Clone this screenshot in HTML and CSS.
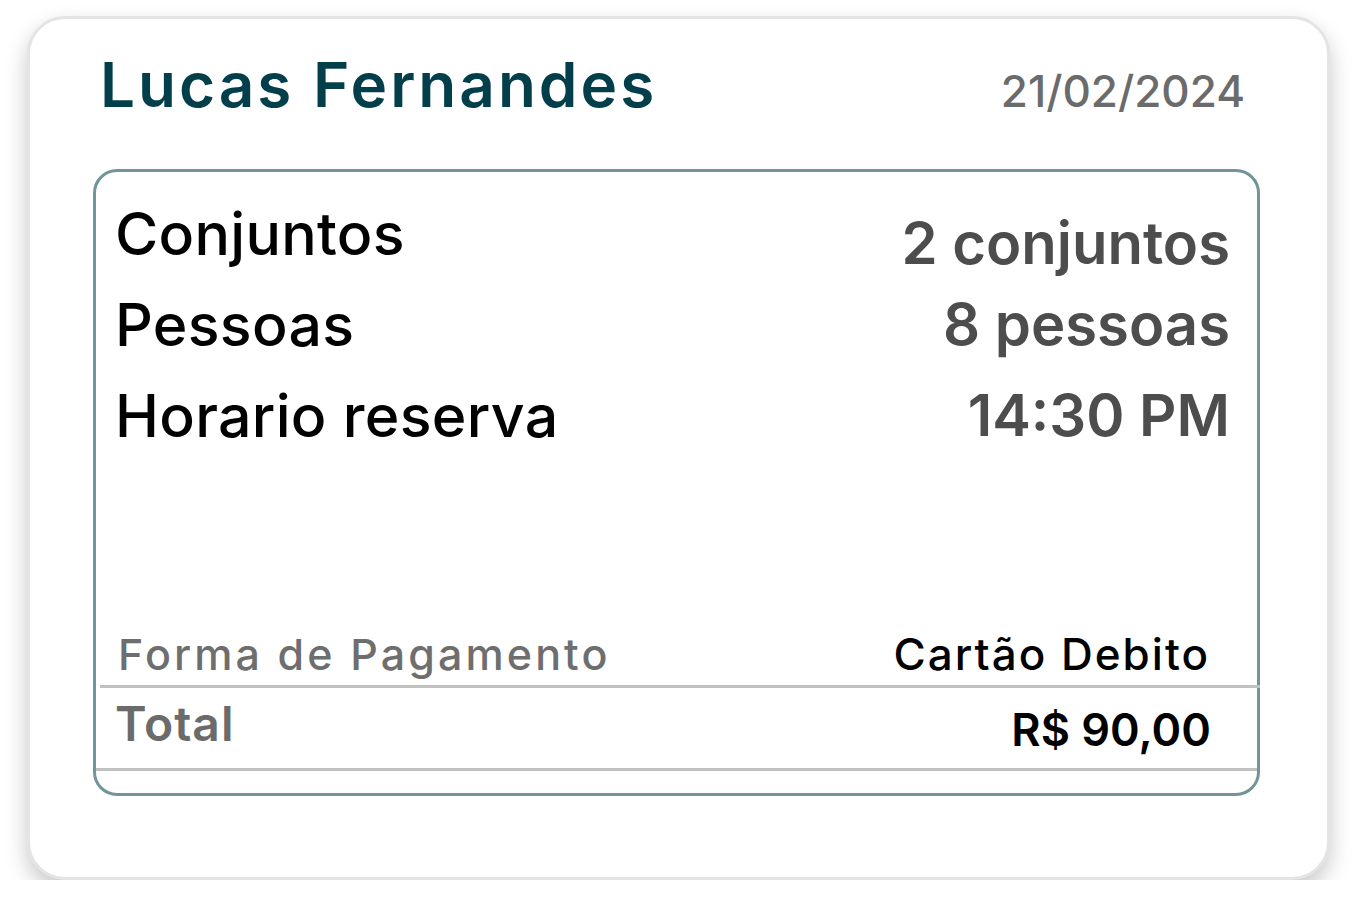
FILE: index.html
```html
<!DOCTYPE html>
<html lang="pt-BR">
<head>
<meta charset="utf-8">
<title>Reserva</title>
<link rel="stylesheet" href="styles.css">
</head>
<body>
<div class="page">
  <section class="card">
    <header class="card-header">
      <h1 class="name">Lucas Fernandes</h1>
      <span class="date">21/02/2024</span>
    </header>
    <div class="details">
      <div class="rows">
        <div class="row row-first">
          <span class="label">Conjuntos</span>
          <span class="value value-first">2 conjuntos</span>
        </div>
        <div class="row">
          <span class="label">Pessoas</span>
          <span class="value">8 pessoas</span>
        </div>
        <div class="row">
          <span class="label">Horario reserva</span>
          <span class="value">14:30 PM</span>
        </div>
      </div>
      <div class="summary">
        <div class="pay-row">
          <span class="pay-label">Forma de Pagamento</span>
          <span class="pay-value">Cartão Debito</span>
        </div>
        <div class="total-row">
          <span class="total-label">Total</span>
          <span class="total-value">R$ 90,00</span>
        </div>
      </div>
    </div>
  </section>
</div>
</body>
</html>
```

FILE: styles.css
```css
* { box-sizing: border-box; }

body {
  margin: 0;
  background: #ffffff;
  font-family: Inter, "Open Sans", "Liberation Sans", sans-serif;
}

.page {
  padding: 16px 0 0 27px;
}

.card {
  width: 1303px;
  height: 864px;
  border: 3px solid #e4e4e4;
  border-radius: 38px;
  background: #ffffff;
  box-shadow: 0 10px 22px rgba(0, 0, 0, 0.22);
  display: flex;
  flex-direction: column;
}

.card-header {
  display: flex;
  justify-content: space-between;
  align-items: baseline;
  padding: 35px 82px 0 70px;
  height: 150px;
}

.name {
  margin: 0;
  font-size: 62px;
  line-height: 62px;
  font-weight: 600;
  letter-spacing: 3px;
  color: #023f4a;
}

.date {
  font-size: 44px;
  line-height: 44px;
  font-weight: 500;
  color: #6b6b6b;
}

.details {
  margin: 0 67px 0 63px;
  height: 627px;
  border: 3px solid #729599;
  border-radius: 24px;
  display: flex;
  flex-direction: column;
  padding: 16px 0 22px 0;
}

.rows {
  display: flex;
  flex-direction: column;
  padding: 0 27px 0 19px;
}

.row {
  display: flex;
  justify-content: space-between;
  align-items: flex-start;
  height: 91px;
}

.label {
  font-size: 59px;
  line-height: 91px;
  font-weight: 500;
  letter-spacing: 0.3px;
  color: #000000;
}

.value {
  font-size: 58px;
  line-height: 91px;
  font-weight: 600;
  color: #4d4d4d;
}

.value-first {
  margin-top: 10px;
}

.summary {
  margin-top: auto;
  display: flex;
  flex-direction: column;
}

.pay-row {
  display: flex;
  justify-content: space-between;
  align-items: baseline;
  margin: 0 -3px 0 4px;
  padding: 0 50px 0 18px;
  border-bottom: 3px solid #c0c0c0;
  height: 65px;
  line-height: 62px;
}

.pay-label {
  font-size: 43px;
  font-weight: 500;
  letter-spacing: 3.1px;
  color: #6e6e6e;
}

.pay-value {
  font-size: 44px;
  font-weight: 500;
  letter-spacing: 2px;
  color: #000000;
}

.total-row {
  display: flex;
  justify-content: space-between;
  align-items: flex-start;
  padding: 0 46px 0 19px;
  border-bottom: 3px solid #c0c0c0;
  height: 83px;
}

.total-label {
  font-size: 48px;
  line-height: 72px;
  font-weight: 600;
  letter-spacing: 1px;
  color: #6b6b6b;
}

.total-value {
  font-size: 45px;
  line-height: 84px;
  font-weight: 600;
  color: #000000;
}
```
